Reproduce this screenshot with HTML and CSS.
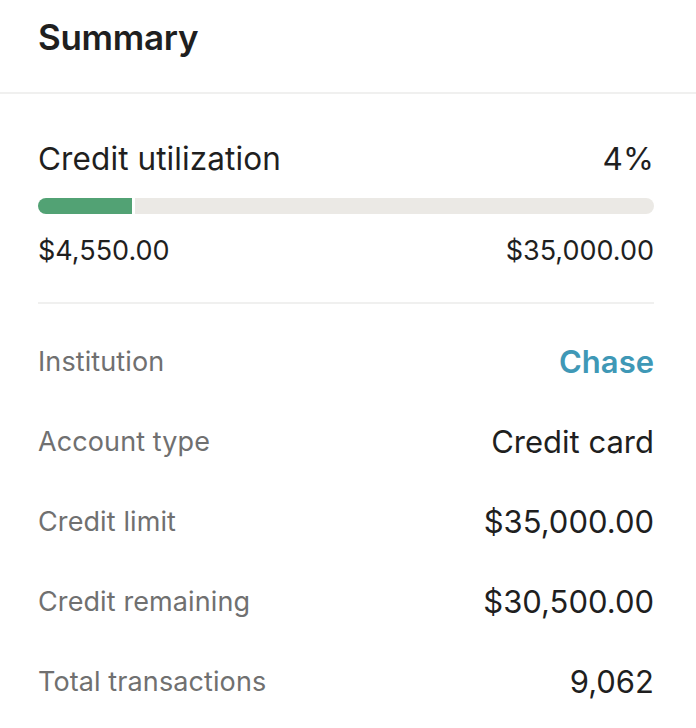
FILE: index.html
```html
<!DOCTYPE html>
<html>
<head>
<meta charset="utf-8">
<link rel="stylesheet" href="styles.css">
</head>
<body>
<div class="panel">
  <header class="panel-header">
    <h1 class="title">Summary</h1>
  </header>
  <section class="content">
    <div class="util">
      <div class="util-head">
        <span class="util-label">Credit utilization</span>
        <span class="util-pct">4%</span>
      </div>
      <div class="bar">
        <div class="bar-fill" style="width: 15.2%"></div>
        <div class="bar-rest"></div>
      </div>
      <div class="util-foot">
        <span>$4,550.00</span>
        <span>$35,000.00</span>
      </div>
    </div>
    <div class="rows">
      <div class="row"><span class="label">Institution</span><span class="value link">Chase</span></div>
      <div class="row"><span class="label">Account type</span><span class="value">Credit card</span></div>
      <div class="row"><span class="label">Credit limit</span><span class="value">$35,000.00</span></div>
      <div class="row"><span class="label">Credit remaining</span><span class="value">$30,500.00</span></div>
      <div class="row"><span class="label">Total transactions</span><span class="value">9,062</span></div>
    </div>
  </section>
</div>
</body>
</html>
```
FILE: styles.css
```css
* { box-sizing: border-box; }
html, body { margin: 0; padding: 0; background: #fff; }
body { font-family: Inter, "Liberation Sans", sans-serif; color: #1f1f1f; }
.panel { width: 696px; height: 728px; overflow: hidden; }
.panel-header { height: 94px; border-bottom: 2px solid #f0f0ef; padding: 16px 38px 0; }
.title { margin: 0; font-size: 35px; font-weight: 600; line-height: normal; letter-spacing: -0.3px; }
.content { padding: 0 42px 0 38px; }
.util { padding-top: 46px; padding-bottom: 35px; border-bottom: 2px solid #f0f0ef; }
.util-head { display: flex; justify-content: space-between; align-items: baseline; font-size: 31.5px; line-height: 38px; letter-spacing: 0.1px; }
.bar { display: flex; gap: 3px; height: 16px; margin-top: 20px; }
.bar-fill { background: #52a274; border-radius: 8px 0 0 8px; }
.bar-rest { flex: 1; background: #ebe9e5; border-radius: 0 8px 8px 0; }
.util-foot { display: flex; justify-content: space-between; font-size: 27px; line-height: 32px; margin-top: 21px; }
.rows { padding-top: 17px; }
.row { height: 80px; display: flex; justify-content: space-between; align-items: center; }
.label { font-size: 27px; color: #707070; letter-spacing: 0.1px; }
.value { font-size: 31px; color: #1f1f1f; }
.link { color: #3f98b6; font-weight: 600; }
```
